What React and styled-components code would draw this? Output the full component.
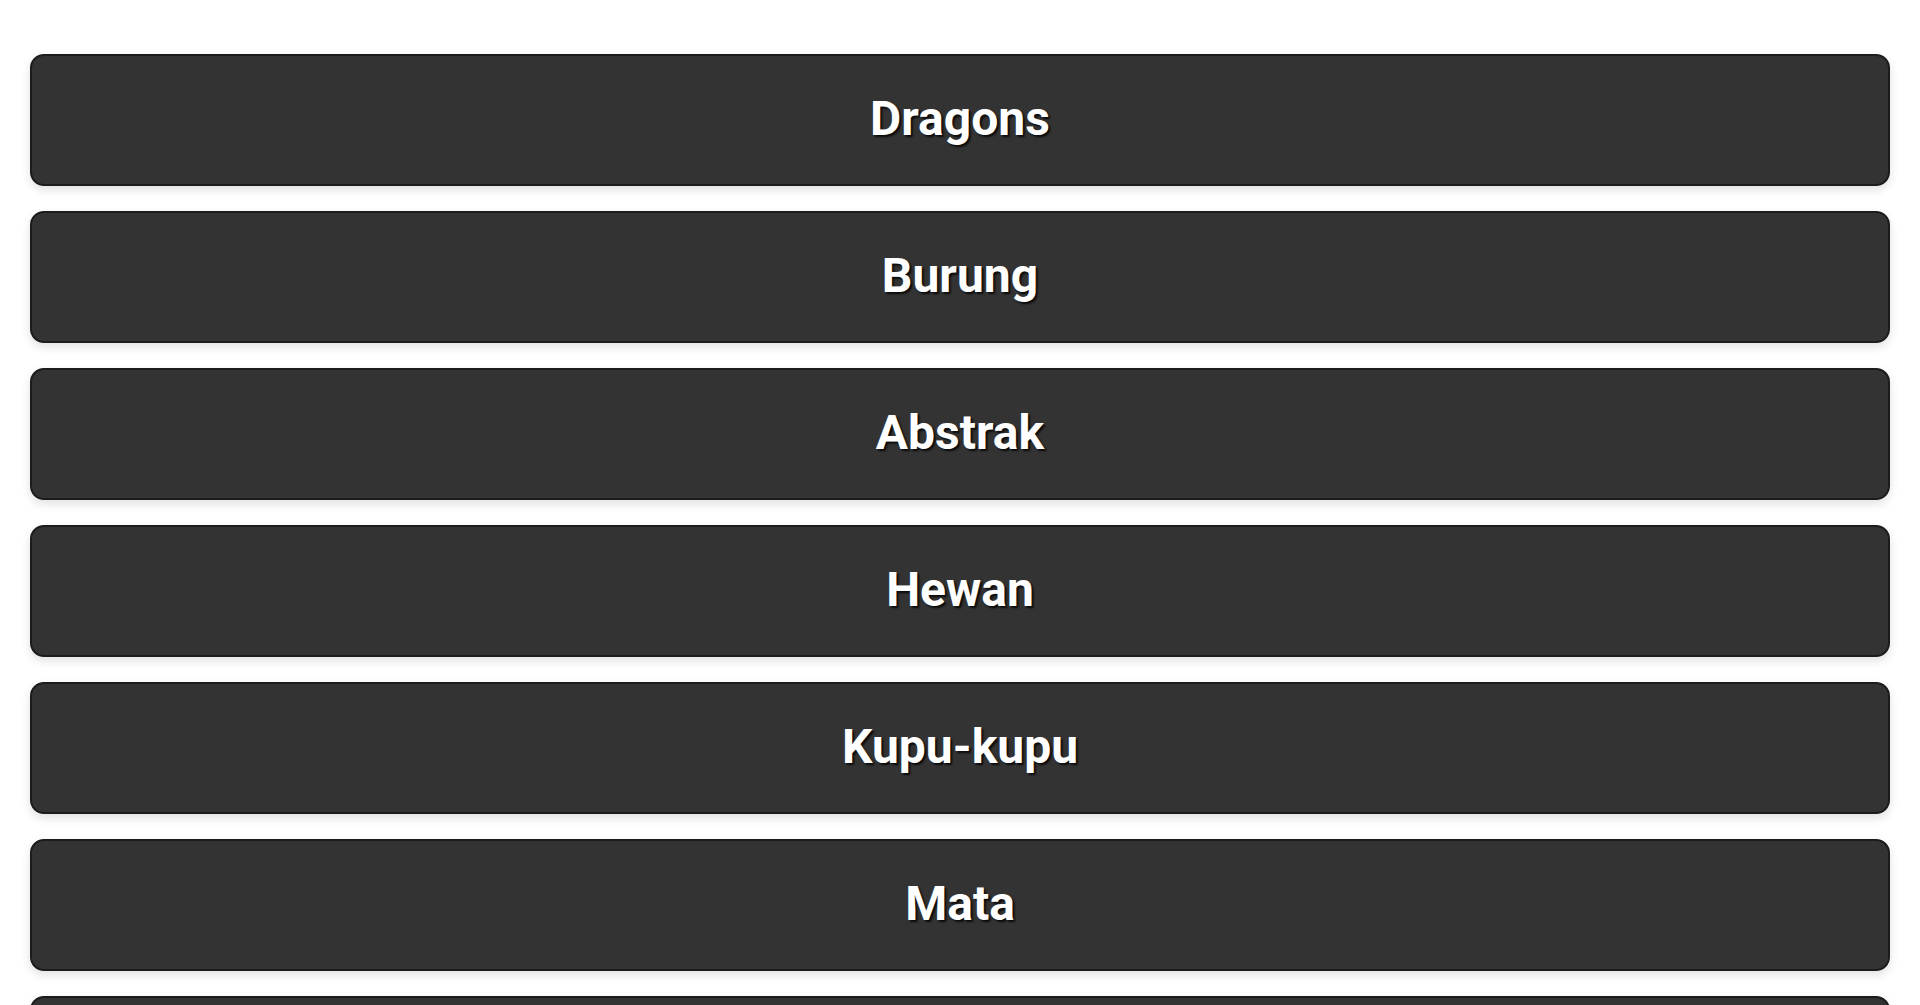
import React from "react";
import styled, { createGlobalStyle } from "styled-components";

const Global = createGlobalStyle`
  html, body { margin: 0; padding: 0; background: #ffffff; }
  body { font-family: Roboto, "Liberation Sans", sans-serif; }
`;

const List = styled.div`
  display: flex;
  flex-direction: column;
  gap: 25px;
  padding: 54px 30px 30px;
`;

const CategoryButton = styled.button`
  display: flex;
  align-items: center;
  justify-content: center;
  box-sizing: border-box;
  width: 100%;
  height: 132px;
  margin: 0;
  padding: 0 0 4px;
  background: #333333;
  border: 2px solid #1c1c1c;
  border-radius: 14px;
  box-shadow: 0 4px 10px rgba(0, 0, 0, 0.12);
  color: #ffffff;
  font-family: Roboto, "Liberation Sans", sans-serif;
  font-weight: 700;
  font-size: 48px;
  text-shadow: 2px 2px 2px rgba(0, 0, 0, 0.8);
  cursor: pointer;
`;

const categories = ["Dragons", "Burung", "Abstrak", "Hewan", "Kupu-kupu", "Mata", "Bunga", "Alam"];

export default function App() {
  return (
    <>
      <Global />
      <List>
        {categories.map((c) => (
          <CategoryButton key={c}>{c}</CategoryButton>
        ))}
      </List>
    </>
  );
}
